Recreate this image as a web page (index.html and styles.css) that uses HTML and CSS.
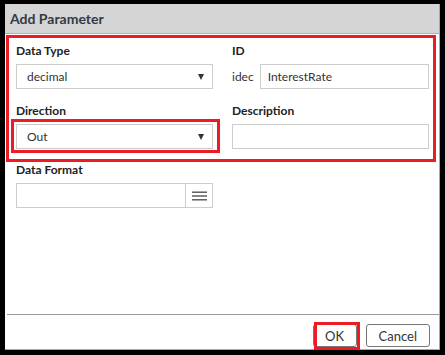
FILE: index.html
```html
<!DOCTYPE html>
<html lang="en">
<head>
    <meta charset="UTF-8">
    <title>Add Parameter</title>
    <link rel="stylesheet" href="styles.css">
</head>
<body>
    <div class="dialog">
        <div class="dialog-title">Add Parameter</div>
        <div class="dialog-body">
            <div class="highlight-box">
                <div class="field-grid">
                    <div class="field">
                        <label class="field-label">Data Type</label>
                        <div class="select">
                            <span>decimal</span>
                            <span class="caret"></span>
                        </div>
                    </div>
                    <div class="field">
                        <label class="field-label">ID</label>
                        <div class="id-row">
                            <span class="prefix">idec</span>
                            <div class="text-input">InterestRate</div>
                        </div>
                    </div>
                    <div class="field">
                        <label class="field-label">Direction</label>
                        <div class="marked">
                            <div class="select">
                                <span>Out</span>
                                <span class="caret"></span>
                            </div>
                            <span class="mark mark-direction"></span>
                        </div>
                    </div>
                    <div class="field">
                        <label class="field-label">Description</label>
                        <div class="text-input"></div>
                    </div>
                </div>
            </div>
            <div class="format-field">
                <label class="field-label">Data Format</label>
                <div class="format-row">
                    <div class="text-input format-input"></div>
                    <div class="menu-button">
                        <svg width="15" height="10" viewBox="0 0 15 10">
                            <rect x="0" y="0.5" width="15" height="1.4" fill="#555"/>
                            <rect x="0" y="4.3" width="15" height="1.4" fill="#555"/>
                            <rect x="0" y="8.1" width="15" height="1.4" fill="#555"/>
                        </svg>
                    </div>
                </div>
            </div>
        </div>
        <div class="dialog-footer">
            <div class="marked">
                <button class="btn btn-ok">OK</button>
                <span class="mark mark-ok"></span>
            </div>
            <button class="btn">Cancel</button>
        </div>
    </div>
</body>
</html>
```

FILE: styles.css
```css
body {
    margin: 0;
    background: #000;
    font-family: Lato, "Open Sans", Arial, sans-serif;
    color: #333;
}

.dialog {
    box-sizing: border-box;
    margin: 4px 5px 0 5px;
    width: 435px;
    height: 346px;
    background: #fff;
    border-right: 1px solid #a8a8a8;
    border-bottom: 1px solid #a8a8a8;
    display: flex;
    flex-direction: column;
}

.dialog-title {
    height: 29px;
    line-height: 29px;
    padding-left: 5px;
    background: #d5d5d5;
    border-bottom: 1px solid #b0b0b0;
    font-size: 14px;
    font-weight: 700;
    color: #333a45;
}

.dialog-body {
    flex: 1;
}

.highlight-box {
    margin: 1px 3px 0 1px;
    border: 3px solid #ec1c24;
    padding: 5px 4px 10px 7px;
}

.field-grid {
    display: grid;
    grid-template-columns: 197px 197px;
    column-gap: 19px;
    row-gap: 14px;
}

.field-label {
    display: block;
    height: 15px;
    line-height: 15px;
    margin-bottom: 6px;
    font-size: 12px;
    font-weight: 700;
    color: #222;
}

.select,
.text-input {
    box-sizing: border-box;
    height: 25px;
    border: 1px solid #ccc;
    font-size: 12px;
    line-height: 23px;
    color: #333;
    background: #fff;
}

.select {
    display: flex;
    justify-content: space-between;
    align-items: center;
    padding: 0 8px 0 10px;
}

.caret {
    width: 0;
    height: 0;
    border-left: 3.5px solid transparent;
    border-right: 3.5px solid transparent;
    border-top: 6px solid #333;
}

.id-row {
    display: flex;
    align-items: center;
    gap: 6px;
}

.prefix {
    font-size: 12px;
}

.id-row .text-input {
    flex: 1;
    padding-left: 7px;
}

.marked {
    position: relative;
}

.mark {
    position: absolute;
    border: 3px solid #ec1c24;
}

.mark-direction {
    top: -5px;
    left: -5px;
    right: -7px;
    bottom: -4px;
}

.format-field {
    padding: 0 0 0 11px;
}

.format-row {
    display: flex;
    width: 197px;
}

.format-input {
    width: 170px;
}

.menu-button {
    box-sizing: border-box;
    width: 27px;
    height: 25px;
    border: 1px solid #ccc;
    border-left: none;
    display: flex;
    align-items: center;
    justify-content: center;
}

.dialog-footer {
    margin-left: 2px;
    height: 34px;
    border-top: 1px solid #999;
    display: flex;
    justify-content: flex-end;
    align-items: flex-start;
    gap: 9px;
    padding: 9px 9px 0 0;
    box-sizing: border-box;
    height: 35px;
}

.btn {
    box-sizing: border-box;
    height: 23px;
    padding: 0 12px;
    border: 1px solid #777;
    border-radius: 3px;
    background: #fff;
    font-family: Lato, "Open Sans", Arial, sans-serif;
    font-size: 13px;
    color: #333;
    display: block;
}

.btn-ok {
    width: 44px;
    padding: 0;
}

.mark-ok {
    top: -2px;
    left: 1px;
    right: -3px;
    bottom: -3px;
}
```
